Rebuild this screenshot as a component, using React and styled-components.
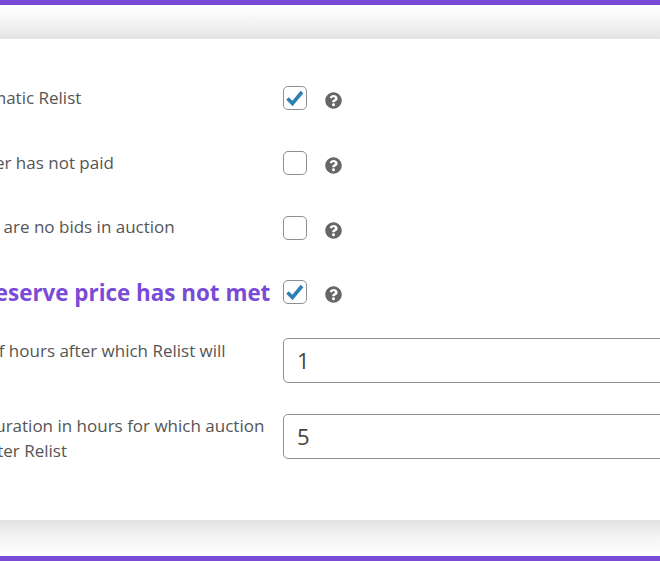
import { styled, createGlobalStyle } from "styled-components";
import { FaQuestionCircle } from "react-icons/fa";

const GlobalStyle = createGlobalStyle`
  html, body { margin: 0; padding: 0; background: white; }
  body { font-family: "Open Sans", "Liberation Sans", sans-serif; }
`;

const Page = styled.div`
  width: 660px;
  height: 561px;
  overflow: hidden;
  display: flex;
  flex-direction: column;
  border-top: 5px solid #7a4bd6;
  border-bottom: 5px solid #7a4bd6;
  box-sizing: border-box;
`;

const Band = styled.div`
  flex: 0 0 ${(p) => p.$height}px;
  background: linear-gradient(${(p) => p.$dir}, #ffffff 0%, #f6f6f6 45%, #e2e2e2 100%);
`;

const Panel = styled.div`
  flex: 1;
  background: white;
  margin-left: -130px;
  padding: 26.8px 0 0 25px;
`;

const Row = styled.div`
  display: grid;
  grid-template-columns: 377px 1fr;
  column-gap: 11px;
  align-items: center;
  width: 900px;
  padding: ${(p) => p.$top}px 0 ${(p) => p.$bottom}px;
`;

const Label = styled.div`
  font-size: ${(p) => (p.$strong ? "22.4px" : "17px")};
  font-weight: ${(p) => (p.$strong ? 700 : 400)};
  line-height: 24.5px;
  color: ${(p) => (p.$strong ? "#7a4bd6" : "#555555")};
  position: relative;
  top: ${(p) => p.$shift || 0}px;
`;

const Field = styled.div`
  display: flex;
  align-items: flex-start;
`;

const CheckBox = styled.div`
  width: 24px;
  height: 24px;
  box-sizing: border-box;
  border: 1px solid #8c8f94;
  border-radius: 5px;
  background: white;
  display: flex;
  align-items: center;
  justify-content: center;
`;

const Help = styled(FaQuestionCircle)`
  width: 17px;
  height: 17px;
  margin: 6px 0 0 18px;
  color: #666666;
`;

const NumberInput = styled.input`
  width: 500px;
  height: 45px;
  box-sizing: border-box;
  border: 1px solid #8c8f94;
  border-radius: 5px;
  padding: 0 13px;
  font-family: inherit;
  font-size: 22px;
  color: #444444;
  background: white;
  outline: none;
`;

function Tick() {
  return (
    <svg width="18" height="16" viewBox="0 0 18 16">
      <path d="M1.5 8.5 L6.5 13.5 L16 2" fill="none" stroke="#2f7fb5" strokeWidth="3.6" />
    </svg>
  );
}

const checks = [
  { text: "Enable Automatic Relist", on: true, shift: 0.5 },
  { text: "Relist if winner has not paid", on: false },
  { text: "Relist if there are no bids in auction", on: false },
  { text: "Relist if reserve price has not met", on: true, strong: true, shift: 1 },
];

const inputs = [
  { text: "Total count of hours after which Relist will happen", value: "1", shift: 3, top: 11 },
  { text: "Fix auction duration in hours for which auction will be run after Relist", value: "5", shift: 2.5, top: 13.5 },
];

export default function App() {
  return (
    <>
      <GlobalStyle />
      <Page>
        <Band $height={34} $dir="to bottom" />
        <Panel>
          {checks.map((c) => (
            <Row key={c.text} $top={20.1} $bottom={20.1}>
              <Label $strong={c.strong} $shift={c.shift}>{c.text}</Label>
              <Field>
                <CheckBox>{c.on && <Tick />}</CheckBox>
                <Help />
              </Field>
            </Row>
          ))}
          {inputs.map((c) => (
            <Row key={c.text} $top={c.top} $bottom={13.5}>
              <Label $shift={c.shift}>{c.text}</Label>
              <Field>
                <NumberInput defaultValue={c.value} />
              </Field>
            </Row>
          ))}
        </Panel>
        <Band $height={36} $dir="to top" />
      </Page>
    </>
  );
}
